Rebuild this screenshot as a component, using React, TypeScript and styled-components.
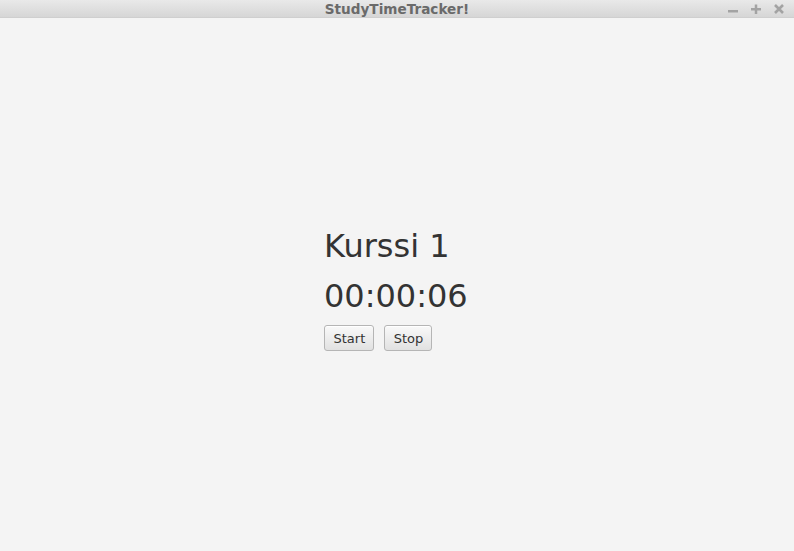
import React from "react";
import styled, { createGlobalStyle } from "styled-components";

const Global = createGlobalStyle`
  html, body { margin: 0; padding: 0; height: 100%; }
  body { background: #f4f4f4; font-family: "DejaVu Sans", sans-serif; }
  #root { height: 100%; }
`;

const Window = styled.div`
  width: 794px;
  height: 551px;
  display: flex;
  flex-direction: column;
  background: #f4f4f4;
  overflow: hidden;
`;

const TitleBar = styled.div`
  position: relative;
  height: 18px;
  flex: none;
  display: flex;
  align-items: center;
  justify-content: center;
  background: linear-gradient(#e9e9e9, #d6d6d6);
  border-bottom: 1px solid #cfcfcf;
  box-sizing: border-box;
`;

const Title = styled.div`
  font-family: "DejaVu Sans", sans-serif;
  font-weight: bold;
  font-size: 13.6px;
  color: #6a6a6a;
  line-height: 18px;
`;

const Controls = styled.div`
  position: absolute;
  right: 9px;
  top: 0;
  height: 17px;
  display: flex;
  align-items: center;
  gap: 11px;
`;

const Ctrl = styled.svg`
  width: 12px;
  height: 12px;
  display: block;
`;

const Body = styled.div`
  flex: 1;
  display: flex;
  align-items: flex-start;
  justify-content: flex-start;
  padding: 210px 0 0 324px;
`;

const Column = styled.div`
  display: flex;
  flex-direction: column;
  align-items: flex-start;
`;

const BigText = styled.div<{ $gap?: number }>`
  font-family: "DejaVu Sans", sans-serif;
  font-size: 32px;
  line-height: 37px;
  color: #333333;
  margin-bottom: ${(p) => p.$gap ?? 0}px;
`;

const Buttons = styled.div`
  display: flex;
  gap: 10px;
`;

const Button = styled.button`
  font-family: "DejaVu Sans", sans-serif;
  font-size: 13px;
  color: #333333;
  height: 26px;
  padding: 0 8px 0 8.5px;
  box-sizing: border-box;
  border: 1px solid #b5b5b5;
  border-radius: 3px;
  background: linear-gradient(#f9f9f9, #e1e1e1);
  box-shadow: inset 0 1px 0 #ffffff;
  cursor: default;
`;

export default function App() {
  return (
    <>
      <Global />
      <Window>
        <TitleBar>
          <Title>StudyTimeTracker!</Title>
          <Controls>
            <Ctrl viewBox="0 0 12 12">
              <rect x="1" y="7" width="10" height="2.5" fill="#a3a3a3" />
            </Ctrl>
            <Ctrl viewBox="0 0 12 12">
              <rect x="1" y="5" width="10" height="2.5" fill="#a3a3a3" />
              <rect x="4.75" y="1.5" width="2.5" height="9.5" fill="#a3a3a3" />
            </Ctrl>
            <Ctrl viewBox="0 0 12 12">
              <path d="M2 2 L10 10 M10 2 L2 10" stroke="#a3a3a3" strokeWidth="2.6" />
            </Ctrl>
          </Controls>
        </TitleBar>
        <Body>
          <Column>
            <BigText $gap={13}>Kurssi 1</BigText>
            <BigText $gap={10}>00:00:06</BigText>
            <Buttons>
              <Button>Start</Button>
              <Button>Stop</Button>
            </Buttons>
          </Column>
        </Body>
      </Window>
    </>
  );
}
